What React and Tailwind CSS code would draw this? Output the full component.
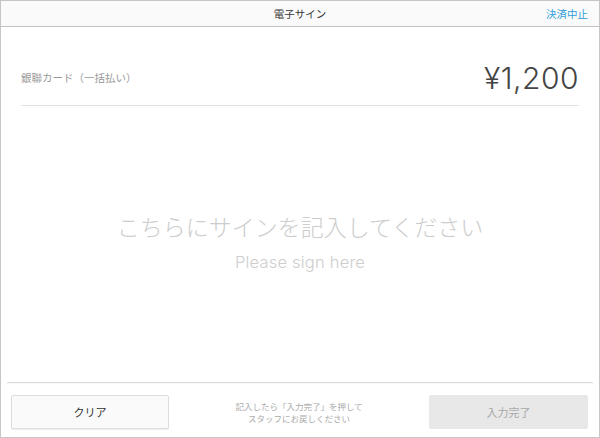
export default function App() {
  const font = { fontFamily: '"Noto Sans CJK JP", "Noto Sans", sans-serif' }

  return (
    <div
      className="w-[600px] h-[438px] flex flex-col bg-white border border-[#c6c6c6] box-border overflow-hidden"
      style={font}
    >
      {/* header */}
      <div className="relative h-[26px] shrink-0 bg-[#fafafa] border-b border-[#c4c4c4] flex items-center justify-center">
        <span className="text-[10.5px] text-[#333]">電子サイン</span>
        <button className="absolute right-[11px] top-0 h-full flex items-center text-[10.5px] text-[#2f9fd8]">
          決済中止
        </button>
      </div>

      {/* amount row */}
      <div className="mx-[20px] pt-[32px] pb-[8px] border-b border-[#e2e2e2] flex items-center justify-between">
        <span className="text-[10.5px] text-[#999]">銀聯カード（一括払い）</span>
        <span
          className="text-[30px] leading-[38px] text-[#444] tracking-[0.5px]"
          style={{ fontFamily: '"Inter", "Roboto", sans-serif', fontWeight: 300 }}
        >
          ¥1,200
        </span>
      </div>

      {/* sign area */}
      <div className="flex-1 flex flex-col items-center justify-center pb-[5px]">
        <p className="text-[23px] leading-[30px] text-[#cdcdcd] font-light">
          こちらにサインを記入してください
        </p>
        <p
          className="mt-[10px] text-[16.5px] leading-[22px] text-[#cdcdcd] tracking-[0.2px]"
          style={{ fontFamily: '"Inter", "Roboto", sans-serif', fontWeight: 300 }}
        >
          Please sign here
        </p>
      </div>

      {/* footer */}
      <div className="mx-[6px] border-t border-[#dcdcdc] shadow-[0_1px_1px_rgba(0,0,0,0.04)]" />
      <div className="h-[54px] shrink-0 flex items-start pt-[12px] pl-[10px] pr-[11px]">
        <button className="w-[158px] h-[34px] bg-[#fafafa] border border-[#dedede] rounded-[2px] shadow-[0_1px_1px_rgba(0,0,0,0.08)] text-[11px] text-[#333]">
          クリア
        </button>
        <div className="flex-1 flex flex-col items-center pt-[5px] text-[8.5px] leading-[12px] text-[#aaa]">
          <span>記入したら「入力完了」を押して</span>
          <span>スタッフにお戻しください</span>
        </div>
        <button className="w-[159px] h-[34px] bg-[#e8e8e8] rounded-[2px] text-[11px] text-[#a8a8a8]">
          入力完了
        </button>
      </div>
    </div>
  )
}
